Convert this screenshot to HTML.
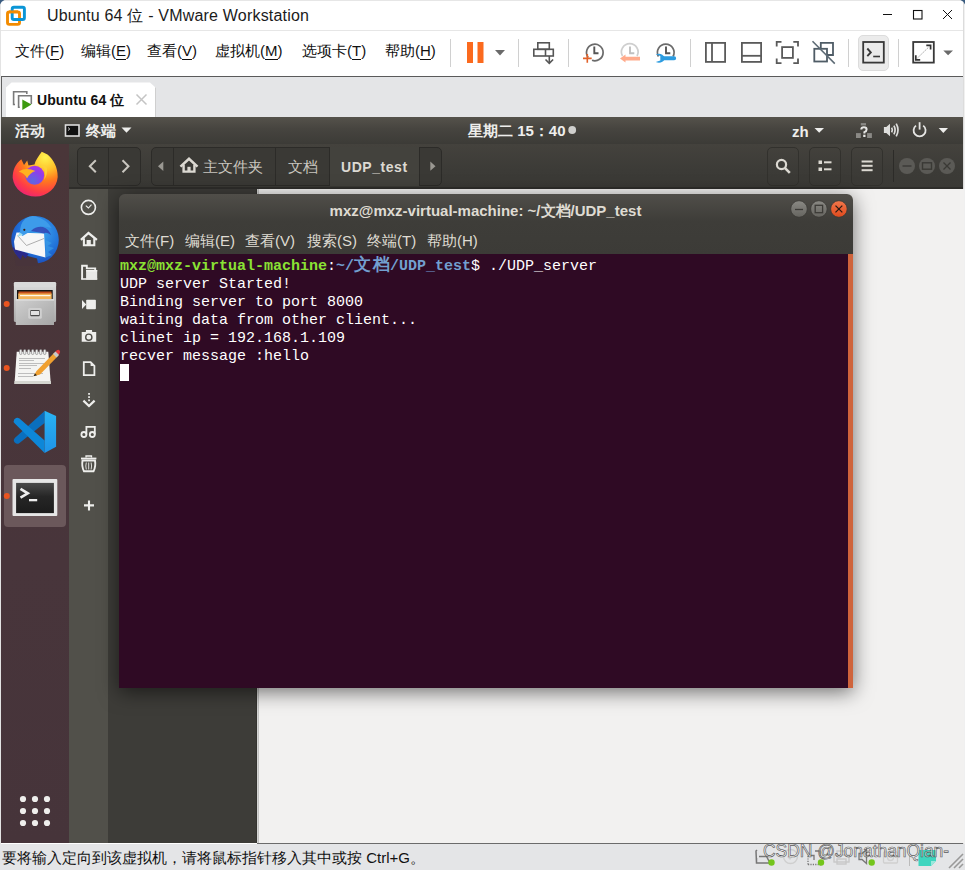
<!DOCTYPE html>
<html><head><meta charset="utf-8">
<style>
*{margin:0;padding:0;box-sizing:border-box}
html,body{width:965px;height:870px;overflow:hidden;background:#fff;font-family:"Liberation Sans",sans-serif}
.a{position:absolute}
svg{position:absolute;overflow:visible}
#title{left:0;top:0;width:965px;height:31px;background:#fff;border-bottom:1px solid #e6e6e6}
#menubar{left:0;top:31px;width:965px;height:45px;background:#fff}
#tabbar{left:0;top:76px;width:965px;height:41px;background:#e4e5e7;border-top:1px solid #5a5a5a}
#panel{left:1px;top:117px;width:962px;height:27px;background:linear-gradient(#55524b,#46443f 45%,#3c3b37)}
#dock{left:1px;top:144px;width:68px;height:699px;background:linear-gradient(#4a3639,#48353b 60%,#46343a)}
#side{left:69px;top:189px;width:39px;height:654px;background:#51504a}
#ndark{left:108px;top:189px;width:150px;height:654px;background:#3d3c38}
#nhead{left:69px;top:144px;width:894px;height:45px;background:linear-gradient(#44423d,#3c3b37 60%,#3a3935);border-bottom:2px solid #2e2d2a}
#ncontent{left:259px;top:189px;width:705px;height:654px;background:#f2f1f0}
#status{left:0;top:844px;width:965px;height:26px;background:#e4e5e7}
#term{left:119px;top:194px;width:734px;height:494px;border-radius:6px 6px 0 0;box-shadow:0 4px 20px rgba(0,0,0,.55)}
#thead{left:0;top:0;width:734px;height:60px;background:linear-gradient(#504e49,#3e3d39 45%,#3c3b37);border-radius:6px 6px 0 0}
#tbody{left:0;top:60px;width:734px;height:434px;background:#2f0a24}
.mono{font-family:"Liberation Mono",monospace}
.tt{font-size:15px;line-height:18px;color:#ffffff;white-space:pre}
.tt b{font-weight:bold}
.cjk{display:inline-block;position:relative;top:-3.5px;width:36px;letter-spacing:1.5px;font-size:16.5px;line-height:18px;vertical-align:top;font-family:"Liberation Sans",sans-serif}
.tmenu{top:37px;font-size:15px;color:#dfdbd2;line-height:20px;white-space:nowrap}
.menu{top:41px;font-size:15px;color:#111;white-space:nowrap;line-height:20px}
.menu u{text-decoration:none;border-bottom:1px solid #111}
.sep{width:1px;background:#d0d0d0}
</style></head>
<body>
<!-- TITLE -->
<div id="title" class="a"></div>
<svg style="left:0;top:0" width="30" height="30">
  <rect x="7.5" y="11.9" width="12" height="12.5" rx="1.8" fill="none" stroke="#f28b00" stroke-width="2.9"/>
  <rect x="12.2" y="7.3" width="12.2" height="12.2" rx="1.8" fill="none" stroke="#0a95d6" stroke-width="2.9"/>
  <path d="M9 11.9 H18" stroke="#f28b00" stroke-width="2.9"/>
</svg>
<div class="a" style="left:47px;top:7px;font-size:16px;letter-spacing:0.2px;color:#1b1b1b;line-height:18px;white-space:nowrap">Ubuntu 64 位 - VMware Workstation</div>
<svg style="left:870px;top:0" width="95" height="30">
  <line x1="13" y1="14.5" x2="22" y2="14.5" stroke="#111" stroke-width="1"/>
  <rect x="43.5" y="10.5" width="8.5" height="8.5" fill="none" stroke="#111" stroke-width="1.1"/>
  <path d="M73 10 L82 19 M82 10 L73 19" stroke="#111" stroke-width="1"/>
</svg>
<!-- MENU -->
<div id="menubar" class="a"></div>
<div class="a menu" style="left:15px">文件(<u>F</u>)</div>
<div class="a menu" style="left:81px">编辑(<u>E</u>)</div>
<div class="a menu" style="left:147px">查看(<u>V</u>)</div>
<div class="a menu" style="left:215px">虚拟机(<u>M</u>)</div>
<div class="a menu" style="left:302px">选项卡(<u>T</u>)</div>
<div class="a menu" style="left:385px">帮助(<u>H</u>)</div>
<div class="a sep" style="left:450px;top:39px;height:28px"></div>
<div class="a sep" style="left:518px;top:39px;height:28px"></div>
<div class="a sep" style="left:568px;top:39px;height:28px"></div>
<div class="a sep" style="left:690px;top:39px;height:28px"></div>
<div class="a sep" style="left:848px;top:39px;height:28px"></div>
<div class="a sep" style="left:898px;top:39px;height:28px"></div>
<!-- toolbar icons -->
<svg style="left:0;top:0" width="965" height="76">
  <rect x="467" y="42" width="6" height="21" fill="#fb6a1e"/>
  <rect x="477.5" y="42" width="6" height="21" fill="#fb6a1e"/>
  <path d="M495 50 L505 50 L500 55.5 Z" fill="#6a6a6a"/>
  <g fill="none" stroke="#555" stroke-width="1.6">
    <rect x="537.8" y="42.8" width="11.5" height="6.5"/>
    <rect x="533.8" y="49.3" width="19.5" height="6.7"/>
    <line x1="545.5" y1="49.3" x2="545.5" y2="56"/>
    <line x1="549.3" y1="56" x2="549.3" y2="63"/>
    <path d="M545.5 59.5 L549.3 63.3 L553.1 59.5"/>
  </g>
  <!-- clocks -->
  <g fill="none" stroke="#6b6b6b" stroke-width="1.7">
    <path d="M588.2 57.5 A8.3 8.3 0 1 1 592 60.3"/>
    <path d="M594.3 46.5 V53.3 H598.5" stroke="#555" stroke-width="1.9"/>
  </g>
  <path d="M587.3 54 V62.8 M583 58.4 H591.7" stroke="#e2622a" stroke-width="1.6"/>
  <g fill="none" stroke="#cfcfcf" stroke-width="1.7">
    <path d="M622.5 56 A8.3 8.3 0 1 1 637 56"/>
    <path d="M630 46.5 V53.3 H634.3" stroke="#c0c0c0" stroke-width="1.9"/>
  </g>
  <path d="M620 58.5 L625.5 54.5 V56.8 H640 V60.5 H625.5 V62.5 Z" fill="#ffab8c"/>
  <g fill="none" stroke="#6b6b6b" stroke-width="1.7">
    <path d="M658.5 56.5 A8.3 8.3 0 1 1 673 56.5"/>
    <path d="M666 46.5 V53.3 H670.3" stroke="#555" stroke-width="1.9"/>
  </g>
  <path d="M655.8 54.6 Q659.5 53 662.3 54.8 Q663.5 55.8 664.2 56.3 H674.2 A1.95 1.95 0 0 1 674.2 60.2 H664.2 Q663.5 60.7 662.3 61.7 Q659.5 63.5 655.8 62 L660.3 60.5 V55.9 Z" fill="#2d9ce0"/>
  <!-- view icons -->
  <g fill="none" stroke="#5a5a5a" stroke-width="1.8">
    <rect x="705.9" y="42.9" width="19.2" height="19"/>
    <line x1="712" y1="42.9" x2="712" y2="61.9"/>
    <rect x="741.9" y="42.9" width="19.2" height="19"/>
    <line x1="741.9" y1="55.8" x2="761.1" y2="55.8"/>
    <path d="M776.7 46.5 V41.9 H781.5 M793.3 41.9 H798 V46.5 M798 58.5 V63.1 H793.3 M781.5 63.1 H776.7 V58.5"/>
    <rect x="782.1" y="47.1" width="10.8" height="10.8"/>
  </g>
  <g fill="none" stroke="#4f5c66" stroke-width="1.8">
    <path d="M820.8 48.8 V42.9 H833 V55 H827"/>
    <rect x="814.3" y="48.8" width="12.7" height="12.7"/>
    <line x1="812.5" y1="41.2" x2="834.8" y2="63.6" stroke="#5c6a74" stroke-width="1.5"/>
  </g>
  <rect x="858.5" y="35.5" width="30" height="35" rx="4.5" fill="#ebebeb" stroke="#dcdcdc"/>
  <g fill="none" stroke="#383838" stroke-width="1.8">
    <rect x="863.2" y="42" width="20.6" height="20.6"/>
    <path d="M867.3 48.5 L870.8 52.4 L867.3 56.2" stroke-width="1.9"/>
    <line x1="873.2" y1="56.5" x2="880" y2="56.5" stroke-width="1.6"/>
    <rect x="913.2" y="42" width="20.6" height="20.6"/>
  </g>
  <g fill="none" stroke="#333" stroke-width="1.7">
    <path d="M926.3 45.3 H930.6 V49.6"/>
    <path d="M915.8 55.3 V59.8 H920.2"/>
  </g>
  <line x1="917.5" y1="58" x2="929" y2="46.8" stroke="#999" stroke-width="1" stroke-dasharray="1.5 1.2"/>
  <path d="M943.3 50.5 L953 50.5 L948.1 55.2 Z" fill="#6a6a6a"/>
</svg>
<!-- TAB BAR -->
<div id="tabbar" class="a"></div>
<div class="a" style="left:0;top:0px;width:1px;height:77px;background:#e3e3e3"></div><div class="a" style="left:0;top:76px;width:1px;height:41px;background:#e8e8e8"></div><div class="a" style="left:1px;top:76px;width:1px;height:41px;background:#5f5f5f"></div>
<svg style="left:0;top:76px" width="170" height="41">
  <path d="M6 41 V11.5 L11.5 6.5 H150 L155.5 11.5 V41 Z" fill="#fff"/>
  <path d="M155.5 11.5 V41" stroke="#cfcfcf" stroke-width="1"/>
  <g fill="none" stroke="#7a7a7a" stroke-width="1.6">
    <path d="M15 28.5 H13.6 V15.8 H26.8 V18"/>
    <path d="M19.8 31.2 H18.6 V19.8 H31.3 V28"/>
  </g>
  <path d="M22.3 23.5 L31.5 28.6 L22.3 34 Z" fill="#3c9a0f"/>
  <path d="M136.5 18.5 L146.5 28.5 M146.5 18.5 L136.5 28.5" stroke="#c4c4c4" stroke-width="1.5"/>
</svg>
<div class="a" style="left:37px;top:91px;font-size:14px;font-weight:bold;color:#111;line-height:18px;white-space:nowrap;letter-spacing:0.1px">Ubuntu 64 位</div>
<!-- VM DISPLAY -->
<div class="a" style="left:0;top:117px;width:1px;height:727px;background:#e3e3e3"></div>
<div class="a" style="left:963px;top:0px;width:1px;height:844px;background:#dcdcdc"></div><div class="a" style="left:964px;top:0px;width:1px;height:844px;background:#f0f0f0"></div><div class="a" style="left:0;top:0;width:965px;height:1px;background:#e6e6e6"></div>
<div id="panel" class="a"></div>
<div class="a" style="left:15px;top:121px;font-size:15px;color:#eeeeec;line-height:20px;white-space:nowrap;font-weight:bold">活动</div>
<svg style="left:60px;top:117px" width="80" height="27">
  <rect x="5.5" y="8" width="13.5" height="11" fill="#111" stroke="#ddd" stroke-width="1.6"/>
  <path d="M8 10.5 L9.8 12 L8 13.5" stroke="#ddd" stroke-width="0.9" fill="none"/>
  <path d="M61.5 10.5 H71.5 L66.5 15.8 Z" fill="#eeeeec"/>
</svg>
<div class="a" style="left:86px;top:121px;font-size:15px;color:#eeeeec;line-height:20px;white-space:nowrap;font-weight:bold">终端</div>
<div class="a" style="left:468px;top:121px;font-size:15px;color:#eeeeec;line-height:20px;white-space:nowrap;font-weight:bold">星期二 15：40</div>
<svg style="left:560px;top:117px" width="405" height="27">
  <circle cx="12.2" cy="13" r="3.9" fill="#cfcfcd"/>
  <path d="M254.5 11 H264 L259.2 15.8 Z" fill="#eeeeec"/>
  <!-- network ? -->
  <rect x="300.8" y="6.1" width="5.2" height="2.3" fill="#8a8985"/>
  <rect x="296" y="16.1" width="4.8" height="4.9" fill="#8a8985"/>
  <rect x="307.1" y="16.1" width="4.8" height="4.9" fill="#8a8985"/>
  <path d="M301.3 12.6 Q301.3 10.3 303.9 10.3 Q306.6 10.3 306.6 12.6 Q306.6 14.3 304.4 15.1 V16.6" stroke="#e6e6e4" stroke-width="2" fill="none"/>
  <rect x="303.2" y="17.7" width="2.3" height="2.3" fill="#e6e6e4"/>
  <!-- speaker -->
  <path d="M323.9 10 H326.3 L330 6.7 V19.3 L326.3 16 H323.9 Z" fill="#dededc"/>
  <path d="M331.7 10.6 Q333 13 331.7 15.4 M333.9 8.6 Q336.3 13 333.9 17.4 M336.2 6.6 Q339.8 13 336.2 19.4" stroke="#dededc" stroke-width="1.7" fill="none"/>
  <!-- power -->
  <path d="M356 8.6 A6 6 0 1 0 363.2 8.6" stroke="#e6e6e4" stroke-width="1.8" fill="none"/>
  <line x1="359.6" y1="5.2" x2="359.6" y2="12.6" stroke="#e6e6e4" stroke-width="1.8"/>
  <path d="M378.7 11 H388 L383.3 16 Z" fill="#eeeeec"/>
</svg>
<div class="a" style="left:792px;top:122px;font-size:15px;color:#eeeeec;line-height:20px;white-space:nowrap;font-weight:bold">zh</div>
<!-- NAUTILUS HEADER -->
<div id="nhead" class="a"></div>
<div class="a" style="left:77px;top:147px;width:64px;height:39px;border:1px solid #2c2b28;border-radius:5px;background:#3a3935"></div>
<div class="a" style="left:108px;top:147px;width:1px;height:39px;background:#2c2b28"></div>
<div class="a" style="left:151px;top:147px;width:291px;height:39px;border:1px solid #2c2b28;border-radius:5px;background:#3a3935"></div>
<div class="a" style="left:173px;top:147px;width:1px;height:39px;background:#2c2b28"></div>
<div class="a" style="left:275px;top:147px;width:1px;height:39px;background:#2c2b28"></div>
<div class="a" style="left:329px;top:147px;width:91px;height:39px;background:#43423d;border-left:1px solid #2c2b28;border-right:1px solid #2c2b28"></div>
<svg style="left:69px;top:144px" width="896" height="45">
  <path d="M26.8 16.3 L20.8 22.2 L26.8 28.2" stroke="#c9c6bf" stroke-width="2" fill="none"/>
  <path d="M53.5 16.3 L59.5 22.2 L53.5 28.2" stroke="#c9c6bf" stroke-width="2" fill="none"/>
  <path d="M89 22.3 L94.3 17.6 V27 Z" fill="#9a9892"/>
  <path d="M361.3 17.6 L366.5 22.2 L361.3 26.8 Z" fill="#9a9892"/>
  <!-- home -->
  <path d="M111.5 22.6 L120 14.8 L128.5 22.6" stroke="#dcd9d2" stroke-width="2.6" fill="none"/>
  <path d="M114.6 20.8 V27.6 H125.4 V20.8" stroke="#dcd9d2" stroke-width="2.4" fill="none"/>
  <rect x="118.4" y="22.8" width="3.2" height="4.8" fill="#dcd9d2"/>
</svg>
<div class="a" style="left:203px;top:156px;font-size:15px;color:#c9c6bf;line-height:22px;white-space:nowrap">主文件夹</div>
<div class="a" style="left:288px;top:156px;font-size:15px;color:#c9c6bf;line-height:22px;white-space:nowrap">文档</div>
<div class="a" style="left:341px;top:156px;font-size:14px;font-weight:bold;color:#dcd9d2;line-height:22px;white-space:nowrap;letter-spacing:0.55px">UDP_test</div>
<div class="a" style="left:767px;top:147px;width:32px;height:39px;border:1px solid #32312d;border-radius:5px"></div>
<div class="a" style="left:809px;top:147px;width:32px;height:39px;border:1px solid #32312d;border-radius:5px"></div>
<div class="a" style="left:851px;top:147px;width:32px;height:39px;border:1px solid #32312d;border-radius:5px"></div>
<div class="a" style="left:893px;top:150px;width:1px;height:32px;background:#2c2b28"></div>
<svg style="left:740px;top:144px" width="225" height="45">
  <circle cx="41.5" cy="20.5" r="4.6" stroke="#dcd9d2" stroke-width="2.2" fill="none"/>
  <line x1="44.8" y1="23.8" x2="49.8" y2="28.8" stroke="#dcd9d2" stroke-width="2.6"/>
  <rect x="78.5" y="16.5" width="3.5" height="3.5" fill="#dcd9d2"/>
  <rect x="78.5" y="23.5" width="3.5" height="3.5" fill="#dcd9d2"/>
  <rect x="84" y="17.3" width="7.5" height="2" fill="#dcd9d2"/>
  <rect x="84" y="24.3" width="7.5" height="2" fill="#dcd9d2"/>
  <rect x="121.6" y="16.5" width="11" height="2" fill="#dcd9d2"/>
  <rect x="121.6" y="20.8" width="11" height="2" fill="#dcd9d2"/>
  <rect x="121.6" y="25.2" width="11" height="2" fill="#dcd9d2"/>
  <circle cx="167" cy="22" r="8" fill="#5b5a56"/>
  <circle cx="187" cy="22" r="8" fill="#5b5a56"/>
  <circle cx="207" cy="22" r="8" fill="#5b5a56"/>
  <line x1="162.5" y1="22" x2="171.5" y2="22" stroke="#3a3935" stroke-width="1.4"/>
  <rect x="182.5" y="18.8" width="9" height="6.4" stroke="#3a3935" stroke-width="1.4" fill="none"/>
  <path d="M203.5 18.5 L210.5 25.5 M210.5 18.5 L203.5 25.5" stroke="#3a3935" stroke-width="1.3"/>
</svg>
<!-- DOCK -->
<div id="dock" class="a"></div>
<svg style="left:0;top:0" width="70" height="870">
  <defs>
    <radialGradient id="ffo" cx="0.72" cy="0.12" r="1.05">
      <stop offset="0" stop-color="#fff44f"/><stop offset="0.28" stop-color="#ffc12a"/>
      <stop offset="0.5" stop-color="#ff7a1e"/><stop offset="0.75" stop-color="#ff3b47"/>
      <stop offset="1" stop-color="#e3188a"/>
    </radialGradient>
    <radialGradient id="ffp" cx="0.4" cy="0.8" r="0.9">
      <stop offset="0" stop-color="#5a6ae0"/><stop offset="0.6" stop-color="#8f3eea"/><stop offset="1" stop-color="#b833e1"/>
    </radialGradient>
    <radialGradient id="tbb" cx="0.6" cy="0.35" r="0.75">
      <stop offset="0" stop-color="#3fa7ee"/><stop offset="0.6" stop-color="#1f6fd8"/><stop offset="1" stop-color="#1b3fae"/>
    </radialGradient>
    <linearGradient id="fcab" x1="0" y1="0" x2="0" y2="1">
      <stop offset="0" stop-color="#dcdcdc"/><stop offset="1" stop-color="#a9a9a9"/>
    </linearGradient>
    <linearGradient id="fdr" x1="0" y1="0" x2="1" y2="1">
      <stop offset="0" stop-color="#cfcfcf"/><stop offset="1" stop-color="#a6a6a6"/>
    </linearGradient>
    <linearGradient id="vsr" x1="0" y1="0" x2="0" y2="1">
      <stop offset="0" stop-color="#29b4f4"/><stop offset="1" stop-color="#1f93e8"/>
    </linearGradient>
    <linearGradient id="tscr" x1="0" y1="0" x2="0" y2="1">
      <stop offset="0" stop-color="#4a4a4a"/><stop offset="0.45" stop-color="#262626"/><stop offset="1" stop-color="#1c1c1c"/>
    </linearGradient>
  </defs>
  <!-- firefox -->
  <path d="M21.3 159.2 C15 164 12.5 171 12.7 178 A22.6 21 0 0 0 57.7 177 C57.7 167 53.5 159.5 47.5 154.5 L41.8 151.8 C38.5 156 35.5 160.5 34.5 164.5 L28.5 165.5 L27.2 160.5 L24 165 Z" fill="url(#ffo)"/>
  <circle cx="34.7" cy="175.3" r="9.5" fill="url(#ffp)"/>
  <path d="M18.8 171.5 Q26 166.8 35.5 171 Q30 172.5 27 178.5 Q25 173.5 18.8 171.5 Z" fill="#ffb21f"/>
  <path d="M39 166 Q44 166 44.5 170 Q46 175 44 180 Q48 174 47 168 Q45 164.5 39 166 Z" fill="#ffd23a" opacity="0.8"/>
  <!-- thunderbird -->
  <circle cx="35" cy="239.8" r="23.8" fill="url(#tbb)"/>
  <path d="M22 254.5 L37 258.5 L38.5 266 L16 266 L14 256 Z" fill="#48343b"/>
  <path d="M12.5 247 Q14.5 254 20.5 259.8 L22.5 255 L25.5 258.5 L28.5 254 Z" fill="#2b2a8a"/>
  <path d="M14 241.5 L16.5 232.5 L44 233.5 L45.5 257.5 L15 249.5 Z" fill="#f7f7f7"/>
  <path d="M17.5 235.5 L26.5 245.5 L44 238.5" stroke="#9a9a9a" stroke-width="0.8" fill="none"/>
  <path d="M20 234 Q19.5 224 25 219 Q30 215 36 216.5 Q46 219 51.5 228 Q46 226 41 226.5 Q35 227.5 31 231 L22.5 236 Z" fill="#3d9bea"/>
  <path d="M19.5 232.5 L17.5 237 L23 234.5 Z" fill="#9fe0f0"/>
  <path d="M31 231 Q36 226 43 227 Q49 229 51 235 Q46 231.5 44 233.5 Z" fill="#3232a8" opacity="0.7"/>
  <circle cx="24.3" cy="229.8" r="1.1" fill="#3a1d10"/>
  <path d="M45.5 240 L52 243 L47.5 246 L54 248 L48 252 L52 255 L45.5 257.5 Z" fill="#3ea0e8" opacity="0.6"/>
  <!-- files -->
  <rect x="13.9" y="281.9" width="42.2" height="40" rx="1.5" fill="url(#fcab)"/>
  <rect x="13.9" y="281.9" width="42.2" height="5" rx="1.5" fill="#d9d9d9"/>
  <rect x="17" y="290" width="35.7" height="9.5" fill="#151515"/>
  <rect x="18.5" y="291.5" width="33" height="3" fill="#c6501c"/>
  <rect x="18.2" y="293.5" width="33.5" height="5.8" fill="#f3b45a"/>
  <rect x="20" y="295" width="30.5" height="1.2" fill="#fff7e8"/>
  <rect x="15.8" y="299.3" width="38.2" height="25.7" fill="url(#fdr)"/>
  <rect x="15.8" y="299.3" width="38.2" height="1.2" fill="#e6e6e6"/>
  <rect x="28.2" y="308" width="13.6" height="10.8" rx="1.5" fill="#d0d0d0"/>
  <rect x="30.3" y="310" width="9.4" height="6.2" rx="0.8" fill="#4a4a4a"/>
  <rect x="31" y="311" width="8" height="4" fill="#e2e2e2"/>
  <circle cx="6.7" cy="304" r="3" fill="#e95420"/>
  <!-- notepad -->
  <path d="M16.7 351.8 H48.3 L50.8 384 H14.5 Z" fill="#f4f4f2"/>
  <rect x="14.5" y="381" width="36.3" height="3" fill="#d5d6d0"/>
  <g fill="#ececec" stroke="#777" stroke-width="0.6">
    <rect x="19.5" y="349.5" width="2.4" height="5" rx="1.2"/><rect x="23.5" y="349.5" width="2.4" height="5" rx="1.2"/>
    <rect x="27.5" y="349.5" width="2.4" height="5" rx="1.2"/><rect x="31.5" y="349.5" width="2.4" height="5" rx="1.2"/>
    <rect x="35.5" y="349.5" width="2.4" height="5" rx="1.2"/><rect x="39.5" y="349.5" width="2.4" height="5" rx="1.2"/>
    <rect x="43.5" y="349.5" width="2.4" height="5" rx="1.2"/>
  </g>
  <g stroke="#bdbdbd" stroke-width="1">
    <path d="M19 358.5 H45 M19 360.5 H34 M19 363.5 H44 M19 365.5 H37 M19 368.5 H31 M18 373.5 H43 M18 376.5 H33"/>
  </g>
  <path d="M33.5 376.3 L36.5 371 L54.5 352.5 L58 356 L40 374.5 Z" fill="#f0a030"/>
  <path d="M33.5 376.3 L35 373.5 L37 375.3 Z" fill="#222"/>
  <path d="M54.5 352.5 L56.8 350.3 Q58.5 349.2 59.6 350.6 Q60.8 352 59.5 353.5 L58 356 Z" fill="#e63a3a"/>
  <path d="M53 354 L55.5 351.5 L59 355 L56.5 357.5 Z" fill="#c8c8c8"/>
  <circle cx="6.7" cy="368" r="3" fill="#e95420"/>
  <!-- vscode -->
  <path d="M44.6 411 L44.6 423 L19.5 443 Q17 444.8 15 442.8 L14.3 442 Q12.8 440 14.8 438 Z" fill="#0a6fbe"/>
  <path d="M14.8 423.5 Q12.8 421.5 14.3 419.5 L15 418.7 Q17 416.7 19.5 418.5 L44.6 440.5 L44.6 453 Z" fill="#0d87d8"/>
  <path d="M44.6 410.8 L56.1 416.1 V446.8 L44.6 453 Z" fill="url(#vsr)"/>
  <!-- terminal -->
  <rect x="4" y="465" width="62" height="62" rx="4" fill="#6b585b"/>
  <rect x="12.5" y="479" width="44.8" height="37" rx="1" fill="#e6e6e6"/>
  <rect x="16.1" y="482.9" width="37.8" height="30.2" fill="url(#tscr)"/>
  <path d="M20.5 488.8 L27.8 493.3 L20.5 497.7" stroke="#eee" stroke-width="2.6" fill="none"/>
  <rect x="29" y="499" width="8.2" height="2.3" fill="#eee"/>
  <circle cx="6.8" cy="496" r="3" fill="#e95420"/>
  <!-- app grid -->
  <g fill="#eeeeec">
    <circle cx="23" cy="799" r="3.1"/><circle cx="35" cy="799" r="3.1"/><circle cx="47" cy="799" r="3.1"/>
    <circle cx="23" cy="811" r="3.1"/><circle cx="35" cy="811" r="3.1"/><circle cx="47" cy="811" r="3.1"/>
    <circle cx="23" cy="823" r="3.1"/><circle cx="35" cy="823" r="3.1"/><circle cx="47" cy="823" r="3.1"/>
  </g>
</svg>
<div id="side" class="a"></div>
<div id="ndark" class="a"></div>
<div id="ncontent" class="a"></div>
<div class="a" style="left:256px;top:189px;width:1px;height:654px;background:#353430"></div><div class="a" style="left:257px;top:189px;width:1px;height:654px;background:#d4d4d3"></div><div class="a" style="left:258px;top:189px;width:1px;height:654px;background:#c4c4c3"></div>
<div class="a" style="left:257px;top:843px;width:706px;height:1px;background:#6b6b6b"></div>
<!-- SIDEBAR ICONS -->
<svg style="left:69px;top:189px" width="39" height="340">
  <g stroke="#eeeeec" fill="none">
    <circle cx="19.4" cy="18.4" r="7" stroke-width="1.6"/>
    <path d="M16.8 16.6 L19.4 19 L22.5 15.6" stroke-width="1.1"/>
    <path d="M11.9 50.8 L19.5 44 L27.9 50.8" stroke-width="2.3"/>
    <path d="M14.9 49.3 V56.2 H25.3 V49.3" stroke-width="2.1"/>
  </g>
  <rect x="17.6" y="51" width="4.2" height="5.5" fill="#eeeeec"/>
  <!-- folder -->
  <path d="M13.1 90.3 V76.8 H17.8 V79.4 H26.2 V81" stroke="#eeeeec" stroke-width="1.9" fill="none"/>
  <rect x="12.2" y="89.2" width="16" height="1.6" fill="#eeeeec"/>
  <rect x="17.1" y="81" width="11.1" height="9.6" fill="#e8e8e6"/>
  <rect x="17.1" y="81" width="11.1" height="1.5" fill="#f2f2f0"/>
  <!-- video -->
  <rect x="17.2" y="110.8" width="9.7" height="9.4" rx="0.8" fill="#eeeeec"/>
  <path d="M13 111 L17.2 115.5 L13 120 Z" fill="#eeeeec"/>
  <!-- camera -->
  <path d="M12.7 143 H16.8 L17 140.9 H23 L23.2 143 H27.2 V152.8 H12.7 Z" fill="#eeeeec"/>
  <circle cx="19.8" cy="148.2" r="3.1" stroke="#4e4d48" stroke-width="1.4" fill="#eeeeec"/>
  <!-- doc -->
  <path d="M14.8 173.1 H21.6 L25.4 176.9 V186.2 H14.8 Z" stroke="#eeeeec" stroke-width="1.8" fill="none"/>
  <path d="M21.6 173.1 L25.4 176.9 H21.6 Z" fill="#eeeeec"/>
  <!-- download -->
  <g fill="#eeeeec"><rect x="19.2" y="204" width="1.7" height="1.8"/><rect x="19.2" y="207.2" width="1.7" height="1.8"/><rect x="19.2" y="210.4" width="1.7" height="1.8"/></g>
  <path d="M14.4 211.6 L20 217 L25.6 211.6" stroke="#eeeeec" stroke-width="2.2" fill="none"/>
  <!-- music -->
  <circle cx="14.9" cy="245.5" r="2.5" stroke="#eeeeec" stroke-width="1.8" fill="none"/>
  <circle cx="23.3" cy="245.5" r="2.5" stroke="#eeeeec" stroke-width="1.8" fill="none"/>
  <path d="M17.4 245.5 V237.8 H25.8 V245.5" stroke="#eeeeec" stroke-width="1.8" fill="none"/>
  <!-- trash -->
  <rect x="12" y="268.6" width="15.4" height="1.8" fill="#eeeeec"/>
  <path d="M17 268.6 V267 H22.5 V268.6" stroke="#eeeeec" stroke-width="1.3" fill="none"/>
  <path d="M13.5 271.5 Q12.5 277.5 15 282.3 H24.5 Q27 277.5 26 271.5 Z" stroke="#eeeeec" stroke-width="1.9" fill="none"/>
  <path d="M17.3 273.5 Q16.3 277 17.3 280.5 M19.7 273.5 V280.5 M22.1 273.5 Q23.1 277 22.1 280.5" stroke="#eeeeec" stroke-width="0.9" fill="none"/>
  <!-- plus -->
  <path d="M20 311.5 V321.5 M15 316.4 H25" stroke="#eeeeec" stroke-width="2.1"/>
</svg>
<!-- TERMINAL -->
<div id="term" class="a">
  <div id="thead" class="a"></div>
  <div class="a" style="left:-0.5px;top:7.5px;width:734px;text-align:center;font-size:15px;font-weight:bold;color:#dfdbd2;line-height:18px;white-space:nowrap;letter-spacing:0px">mxz@mxz-virtual-machine: ~/文档/UDP_test</div>
  <svg style="left:670px;top:5px" width="64" height="30">
    <defs>
      <linearGradient id="bg1" x1="0" y1="0" x2="0" y2="1"><stop offset="0" stop-color="#8a8984"/><stop offset="1" stop-color="#65645f"/></linearGradient>
      <linearGradient id="bg2" x1="0" y1="0" x2="0" y2="1"><stop offset="0" stop-color="#f3774b"/><stop offset="1" stop-color="#df4a1d"/></linearGradient>
    </defs>
    <circle cx="10" cy="10" r="8.3" fill="url(#bg1)" stroke="#3a3935" stroke-width="0.8"/>
    <circle cx="29.9" cy="10" r="8.3" fill="url(#bg1)" stroke="#3a3935" stroke-width="0.8"/>
    <circle cx="49.9" cy="10" r="8.3" fill="url(#bg2)" stroke="#3a3935" stroke-width="0.8"/>
    <line x1="6" y1="10.5" x2="14" y2="10.5" stroke="#3c3b37" stroke-width="1.3"/>
    <rect x="26.2" y="6.3" width="7.4" height="7.4" stroke="#3c3b37" stroke-width="1.3" fill="none"/>
    <path d="M46.5 6.6 L53.3 13.4 M53.3 6.6 L46.5 13.4" stroke="#2a1a14" stroke-width="1.3"/>
  </svg>
  <div class="a tmenu" style="left:6px">文件(F)</div>
  <div class="a tmenu" style="left:66px">编辑(E)</div>
  <div class="a tmenu" style="left:126px">查看(V)</div>
  <div class="a tmenu" style="left:188px">搜索(S)</div>
  <div class="a tmenu" style="left:248px">终端(T)</div>
  <div class="a tmenu" style="left:308px">帮助(H)</div>
  <div id="tbody" class="a"></div>
  <div class="a" style="left:729px;top:60px;width:5px;height:434px;background:#cf643c"></div>
  <div class="a mono tt" style="left:1px;top:64px"><b style="color:#8ae234">mxz@mxz-virtual-machine</b>:<b style="color:#729fcf">~/<span class="cjk">文档</span>/UDP_test</b>$ ./UDP_server</div>
  <div class="a mono tt" style="left:1px;top:82px">UDP server Started!</div>
  <div class="a mono tt" style="left:1px;top:100px">Binding server to port 8000</div>
  <div class="a mono tt" style="left:1px;top:118px">waiting data from other client...</div>
  <div class="a mono tt" style="left:1px;top:136px">clinet ip = 192.168.1.109</div>
  <div class="a mono tt" style="left:1px;top:154px">recver message :hello</div>
  <div class="a" style="left:1px;top:169.5px;width:9px;height:17.5px;background:#ffffff"></div>
</div>
<div id="status" class="a"></div>
<div class="a" style="left:2px;top:848px;font-size:15px;color:#111;line-height:20px;white-space:nowrap">要将输入定向到该虚拟机，请将鼠标指针移入其中或按 Ctrl+G。</div>
<svg style="left:740px;top:844px" width="225" height="26">
  <g fill="none" stroke="#777" stroke-width="1.5">
    <path d="M17 6 L16 7 L16.5 19 H30 L26.5 12.5 H19 M16.5 19 V14"/>
  </g>
  <circle cx="31.5" cy="18.5" r="3.2" fill="#74c51c"/>
  <circle cx="50.5" cy="12.5" r="7" fill="none" stroke="#cfcfcf" stroke-width="1.4"/>
  <path d="M47.5 12.5 L50 15 L54 10" stroke="#cfcfcf" stroke-width="1.2" fill="none"/>
  <g fill="none" stroke="#777" stroke-width="1.3">
    <path d="M75 7 H80 V12 M68 11.5 H74 V16" />
    <path d="M68 20.5 H82" stroke-dasharray="1.2 1.2"/>
    <path d="M68 12 V20.5" stroke-dasharray="1.2 1.2"/>
  </g>
  <circle cx="81" cy="18.5" r="3.2" fill="#74c51c"/>
  <g fill="none" stroke="#c8c8c8" stroke-width="1.4">
    <rect x="94" y="11" width="15" height="7"/>
    <rect x="97" y="7" width="9" height="4"/>
    <rect x="97" y="15" width="9" height="5"/>
  </g>
  <path d="M119 9.5 H122 L126.5 5.5 V19.5 L122 15.5 H119 Z" fill="none" stroke="#777" stroke-width="1.3"/>
  <circle cx="131.7" cy="18.5" r="3.2" fill="#74c51c"/>
  <g fill="none" stroke="#cfcfcf" stroke-width="1.3">
    <rect x="143.5" y="8" width="14" height="11" rx="1"/>
    <circle cx="150.5" cy="13.5" r="3"/>
  </g>
  <line x1="169.5" y1="5" x2="169.5" y2="22" stroke="#bbb" stroke-width="1"/>
  <path d="M178.5 6 H196 V17 L191 22 H178.5 Z" fill="#3fd5bf"/>
  <path d="M191 22 V17 H196" fill="#9ae8dc"/>
  <g stroke="#999" stroke-width="1.6">
    <line x1="209" y1="24" x2="223" y2="10"/>
    <line x1="214" y1="24" x2="223" y2="15"/>
    <line x1="219" y1="24" x2="223" y2="20"/>
  </g>
</svg>
<div id="wm" class="a" style="left:763px;top:841px;font-size:17.5px;color:rgba(255,255,255,0.65);line-height:20px;white-space:nowrap;-webkit-text-stroke:0.65px rgba(60,60,60,0.85);letter-spacing:-0.05px">CSDN @JonathanQian-</div>
<svg style="left:0;top:0" width="965" height="6">
  <path d="M0 0 H4.5 Q1.2 1.2 0 4.5 Z" fill="#3a5c80"/>
  <path d="M965 0 H960.5 Q963.8 1.2 965 4.5 Z" fill="#3a5c80"/>
</svg>
</body></html>
